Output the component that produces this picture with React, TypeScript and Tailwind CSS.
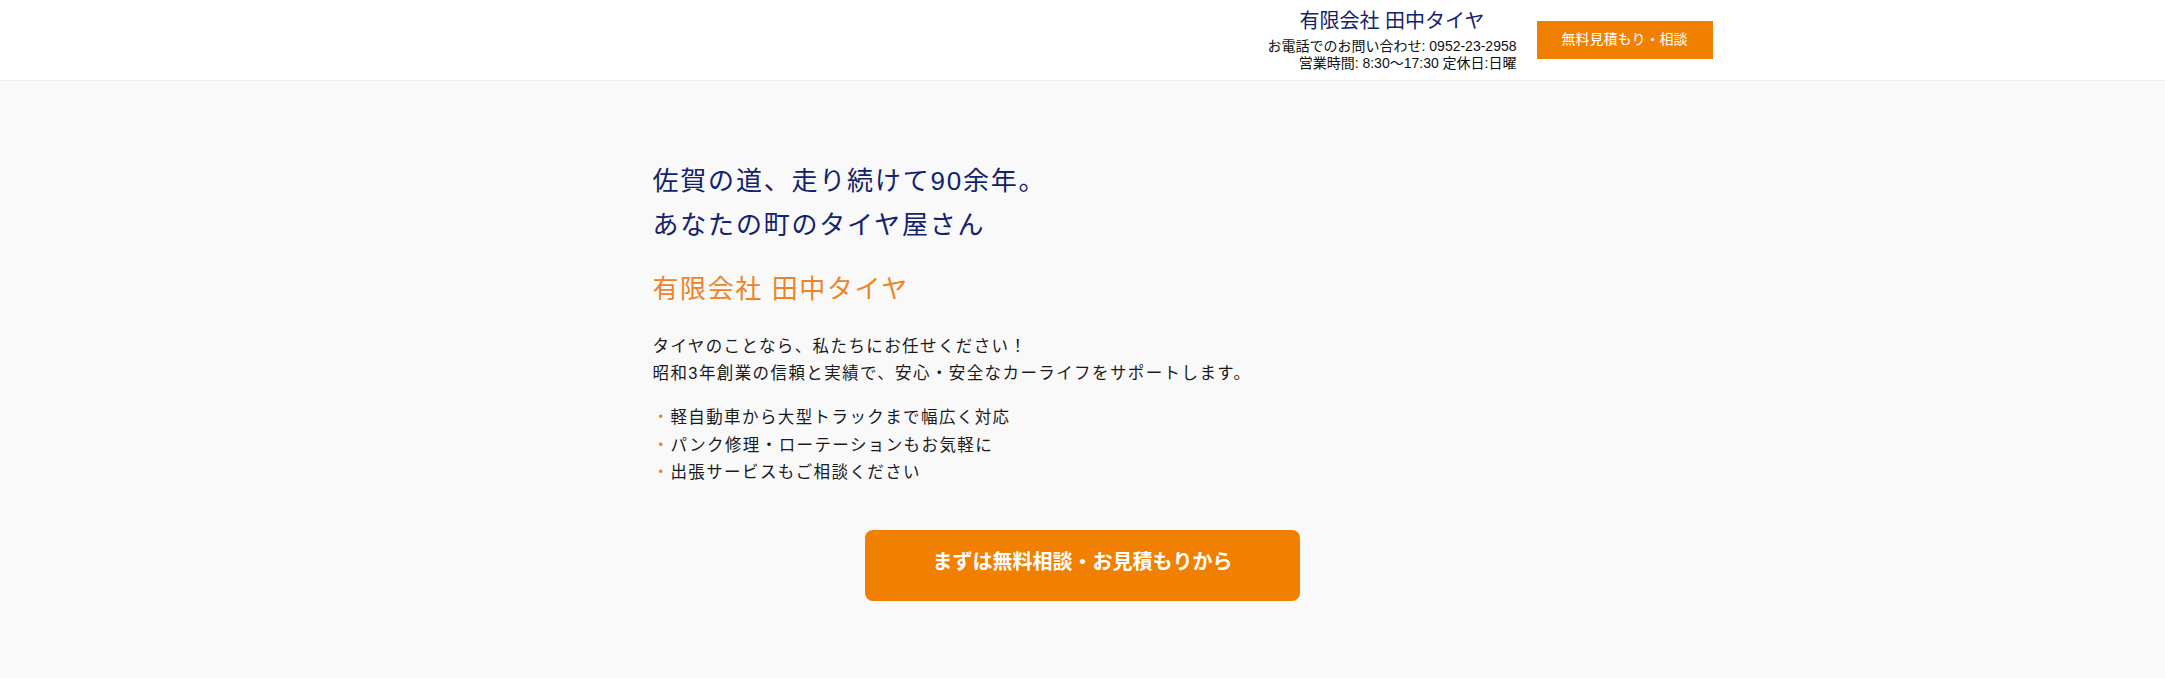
import React from 'react';

const FONT = "font-['Liberation_Sans','Noto_Sans_CJK_JP',sans-serif]";

const points = [
  '軽自動車から大型トラックまで幅広く対応',
  'パンク修理・ローテーションもお気軽に',
  '出張サービスもご相談ください',
];

function Header() {
  return (
    <header className="bg-white border-b border-[#eeeeee] h-[81px]">
      <div className="max-w-[1260px] mx-auto h-full flex items-center justify-end gap-5">
        <div className="flex flex-col items-stretch">
          <div className="text-center text-[20px] leading-[24px] text-[#13236b] mb-[5px]">有限会社 田中タイヤ</div>
          <div className="text-right text-[14px] leading-[16.5px] text-[#111111]">
            <p>お電話でのお問い合わせ: 0952-23-2958</p>
            <p>営業時間: 8:30〜17:30 定休日:日曜</p>
          </div>
        </div>
        <button className="w-[176px] h-[38px] bg-[#f28000] text-white text-[14px] mt-[-1px]">
          無料見積もり・相談
        </button>
      </div>
    </header>
  );
}

function Hero() {
  return (
    <section className="bg-[#f9f9f9] pt-[78px] pb-[80px]">
      <div className="max-w-[860px] mx-auto">
        {/* キャッチコピー */}
        <h1 className="text-[26px] leading-[44px] tracking-[1.8px] text-[#13236b] font-normal">
          佐賀の道、走り続けて90余年。
          <br />
          あなたの町のタイヤ屋さん
        </h1>
        <h2 className="mt-[20px] text-[26px] leading-[44px] tracking-[1.6px] text-[#ee8426] font-normal">
          有限会社 田中タイヤ
        </h2>

        <p className="mt-[22px] text-[16.5px] leading-[27px] tracking-[1.4px] text-[#1a1a1a]">
          タイヤのことなら、私たちにお任せください！
          <br />
          昭和3年創業の信頼と実績で、安心・安全なカーライフをサポートします。
        </p>

        <ul className="mt-[17px] text-[16.5px] leading-[27.6px] tracking-[1.4px] text-[#1a1a1a]">
          {points.map((item) => (
            <li key={item} className="flex">
              <span className="text-[#ee8426]">・</span>
              <span>{item}</span>
            </li>
          ))}
        </ul>

        <div className="flex justify-center mt-[43px]">
          <button className="w-[435px] h-[71px] rounded-lg bg-[#f28000] text-white text-[20px] font-bold pb-[6px]">
            まずは無料相談・お見積もりから
          </button>
        </div>
      </div>
    </section>
  );
}

export default function App() {
  return (
    <div className={`${FONT} min-h-[678px] bg-[#f9f9f9]`}>
      <Header />
      <Hero />
    </div>
  );
}
